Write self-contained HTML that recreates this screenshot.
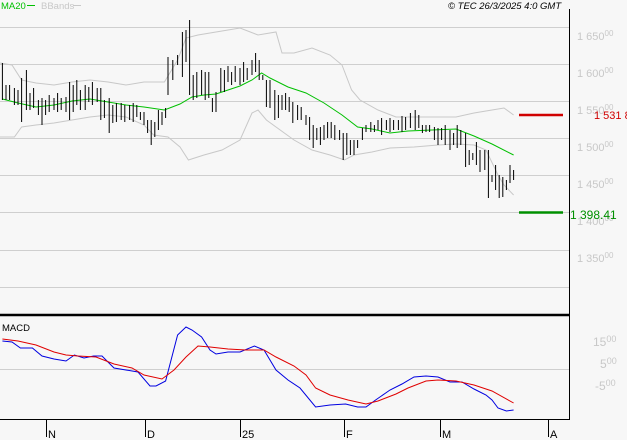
<!DOCTYPE html>
<html><head><style>
html,body{margin:0;padding:0;background:#f7f7f7;}
svg{display:block;}
text{font-family:"Liberation Sans",sans-serif;}
</style></head><body>
<svg width="627" height="440" viewBox="0 0 627 440" xmlns="http://www.w3.org/2000/svg">
<rect width="627" height="440" fill="#f7f7f7"/>
<g stroke="#cfcfcf" stroke-width="1">
<path d="M0 27.5H569M0 64.5H569M0 101.5H569M0 138.5H569M0 175.5H569M0 212.5H569M0 250.5H569M0 287.5H569M0 369.5H569"/>
</g>
<g transform="scale(1.2,1)" fill="none">
<polyline vector-effect="non-scaling-stroke" stroke="#c8c8c8" stroke-width="1" points="0,63 10,65 18,80 30,83 45,85 60,82 75,80 90,82 105,85 120,82 137,82 148,60 155,38 165,35 180,32 200,28 215,35 230,32 235,53 245,53 260,48 275,55 285,65 293,90 300,100 315,110 330,117 345,117 360,117 380,117 395,113 410,110 420,108 428,115"/>
<polyline vector-effect="non-scaling-stroke" stroke="#c8c8c8" stroke-width="1" points="0,137 12,137 18,127 30,125 45,123 60,120 75,117 90,115 105,117 120,125 128,135 140,137 150,147 157,160 170,155 185,150 200,140 210,113 215,110 222,120 230,127 245,140 260,150 275,155 287,160 295,155 310,152 325,148 345,147 365,145 380,144 395,145 405,150 415,175 420,185 428,195"/>
<polyline vector-effect="non-scaling-stroke" stroke="#00c000" stroke-width="1" points="2,99 15,103 30,107 45,105 60,101 75,99 90,102 105,105 120,107 137,110 150,104 160,97 170,95 180,94 190,90 200,86 210,80 218,73 225,78 240,87 255,93 270,103 285,115 298,127 310,129 325,133 340,131 360,130 380,129 395,136 410,144 428,155"/>
<path vector-effect="non-scaling-stroke" stroke="#000" stroke-width="1" d="M2,63V100M5,85V100M8,85V100M12,88V105M15,90V105M18,78V122M22,70V110M25,93V110M28,88V108M32,100V115M35,98V125M38,100V115M41,95V112M45,98V110M48,93V112M51,98V110M55,97V112M58,82V120M61,85V112M64,80V105M67,90V110M71,85V110M74,87V102M77,82V105M81,88V102M84,88V120M87,100V118M91,98V133M94,105V123M97,103V122M101,103V120M104,105V122M108,105V120M111,103V122M114,105V117M117,112V120M120,112V125M123,120V133M126,120V145M129,122V137M132,110V130M135,112V125M138,108V118M140,57V95M144,60V80M148,55V65M152,32V77M155,30V62M158,20V95M161,75V100M164,72V98M168,70V95M171,72V100M174,72V98M177,98V112M180,92V112M184,68V92M187,70V92M190,66V82M193,72V85M196,66V82M200,68V85M203,62V82M206,68V80M210,60V75M213,53V72M216,60V80M219,75V80M222,80V107M225,80V108M229,90V120M232,95V118M235,95V110M238,93V110M241,97V112M244,102V123M248,105V120M251,107V120M255,115V125M258,117V140M261,125V148M264,128V140M267,127V145M270,125V140M273,122V138M276,122V138M279,125V140M283,130V140M286,133V160M289,133V155M292,140V155M295,140V155M298,140V148M302,128V140M305,125V132M309,122V132M312,125V132M315,120V130M318,118V135M322,120V130M325,118V132M328,120V130M332,120V130M335,116V132M338,117V130M342,113V128M346,110V130M349,115V128M352,125V133M355,125V132M358,125V132M362,127V140M365,128V145M368,128V140M371,125V145M375,130V150M378,133V145M381,125V148M384,130V145M388,133V167M391,150V165M394,153V160M397,142V165M400,150V172M404,150V170M407,150V198M410,175V182M413,165V190M416,175V198M419,177V197M422,180V190M425,165V183M428,170V180"/>
<polyline vector-effect="non-scaling-stroke" stroke="#0000e0" stroke-width="1" points="2,341 10,342 17,348 27,348 35,356 45,359 55,361 62,355 70,358 78,356 85,356 95,368 105,370 115,372 125,386 130,386 138,381 148,335 155,327 160,330 168,337 175,350 180,354 190,352 200,352 212,346 220,350 230,370 240,380 250,388 263,407 275,405 288,404 298,407 305,407 313,400 325,390 335,384 345,377 355,376 365,377 375,382 385,382 395,389 405,395 410,400 415,408 422,411 428,410"/>
<polyline vector-effect="non-scaling-stroke" stroke="#e00000" stroke-width="1" points="2,339 15,341 30,345 45,352 55,355 65,356 80,357 95,364 110,368 120,375 135,379 145,370 155,357 165,346 175,347 190,349 205,350 220,350 230,357 245,366 255,375 263,388 275,395 290,400 305,404 315,401 330,394 340,388 355,381 365,380 380,381 395,385 410,391 428,403"/>
</g>
<path d="M569.5 9V420M0 419.5H570" stroke="#000" stroke-width="1" fill="none"/>
<path d="M0 315H569" stroke="#000" stroke-width="2.5"/>
<path d="M46.5 420V437M145.5 420V437M240.5 420V437M344.5 420V437M440.5 420V437M548.5 420V437" stroke="#000"/>
<g font-size="11" fill="#000">
<text x="48" y="438">N</text><text x="147" y="438">D</text><text x="242" y="438">25</text><text x="346" y="438">F</text><text x="442" y="438">M</text><text x="550" y="438">A</text>
</g>
<path d="M519 115H563" stroke="#d00000" stroke-width="2.5"/>
<path d="M519 212.5H563" stroke="#009000" stroke-width="2.5"/>
<g font-size="11" fill="#c8c8c8">
<text x="577" y="40">1 650<tspan font-size="8" dy="-4">00</tspan></text>
<text x="577" y="77">1 600<tspan font-size="8" dy="-4">00</tspan></text>
<text x="577" y="114">1 550<tspan font-size="8" dy="-4">00</tspan></text>
<text x="577" y="151">1 500<tspan font-size="8" dy="-4">00</tspan></text>
<text x="577" y="188">1 450<tspan font-size="8" dy="-4">00</tspan></text>
<text x="577" y="225">1 400<tspan font-size="8" dy="-4">00</tspan></text>
<text x="577" y="262">1 350<tspan font-size="8" dy="-4">00</tspan></text>
<text x="593" y="346" font-size="12">15<tspan font-size="9" dy="-4">00</tspan></text>
<text x="600" y="368" font-size="12">5<tspan font-size="9" dy="-4">00</tspan></text>
<text x="595" y="390" font-size="12">-5<tspan font-size="9" dy="-4">00</tspan></text>
</g>
<text x="594" y="119" font-size="11" fill="#d00000">1 531 8</text>
<text x="570" y="219" font-size="12" fill="#009000">1 398.41</text>
<text x="1" y="9" font-size="9.5" fill="#00c000">MA20</text>
<path d="M27 5.5H35" stroke="#00c000"/>
<text x="41" y="9" font-size="9.5" fill="#c8c8c8">BBands</text>
<path d="M73 5.5H81" stroke="#c8c8c8"/>
<text x="448" y="9" font-size="9.5" font-style="italic" fill="#000">© TEC 26/3/2025 4:0 GMT</text>
<text x="2" y="331" font-size="9.5" fill="#000">MACD</text>
</svg>
</body></html>
